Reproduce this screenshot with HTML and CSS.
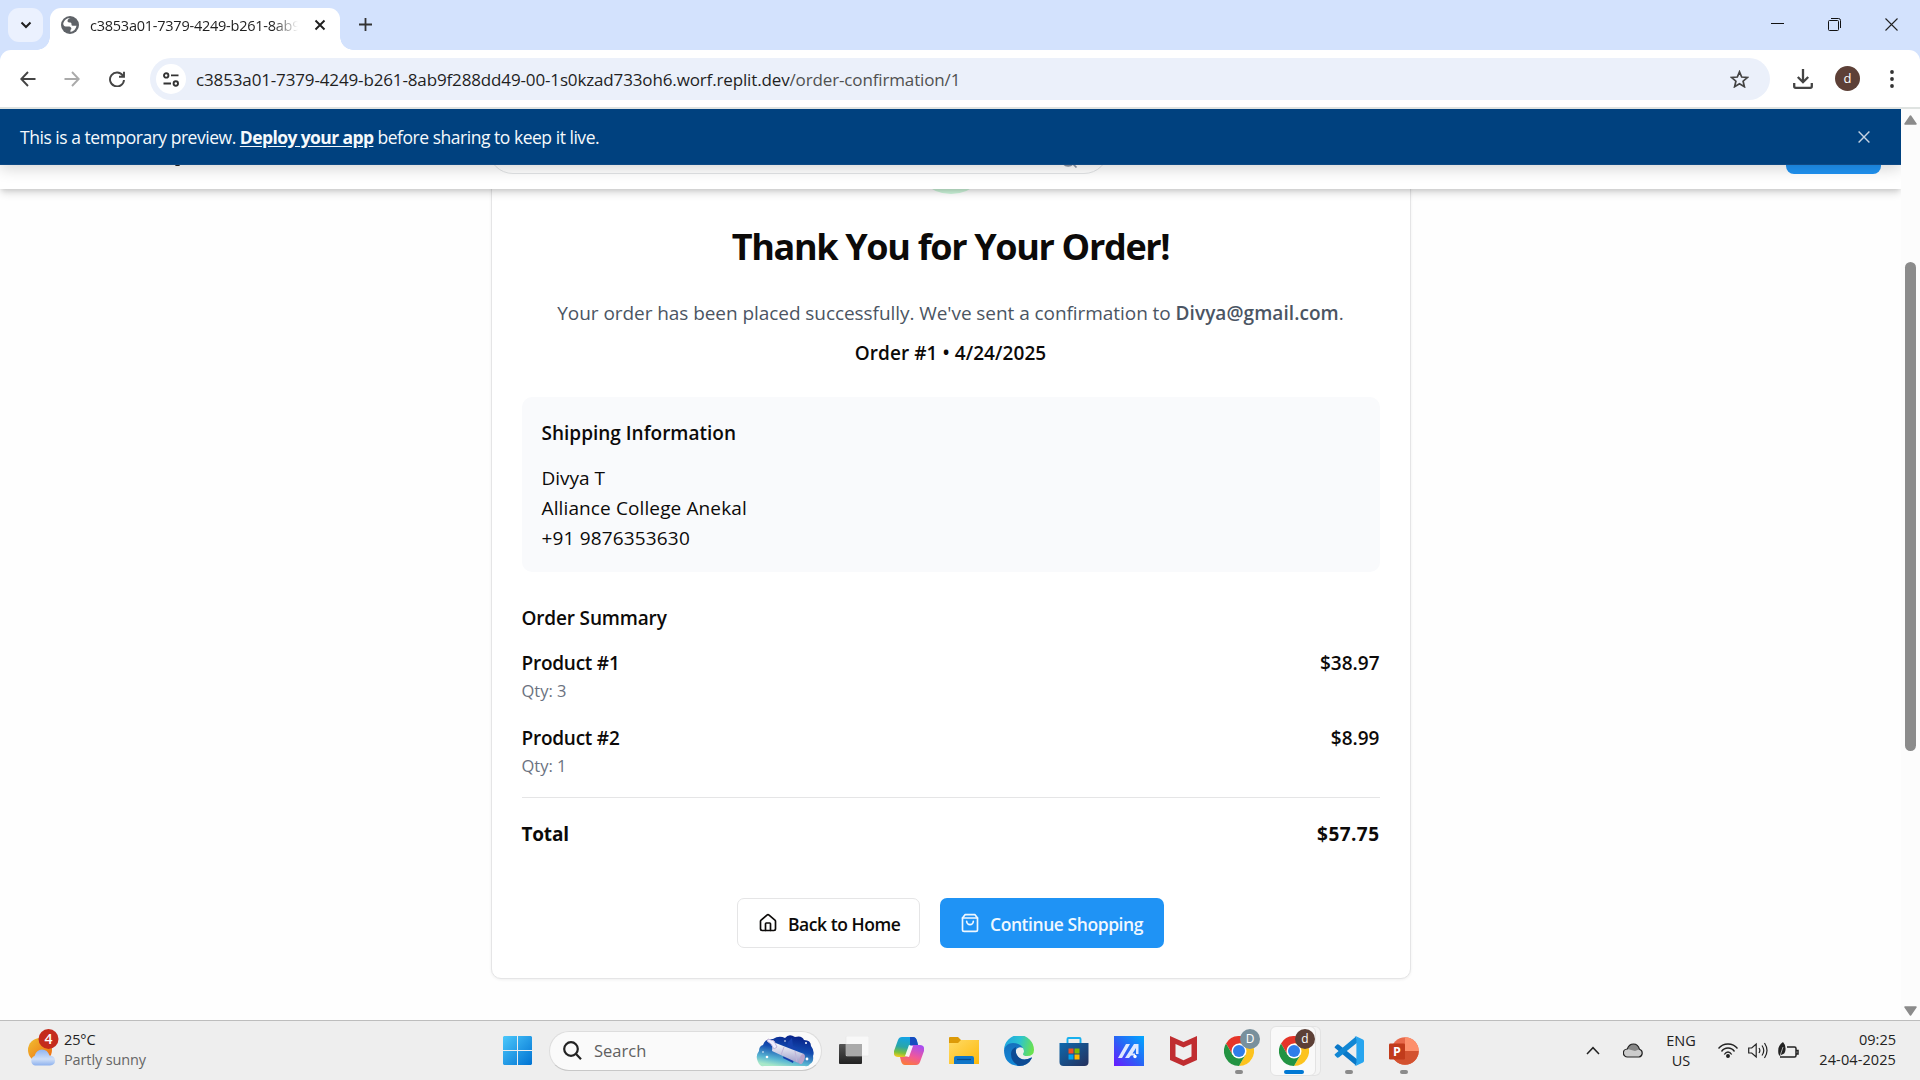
FILE: index.html
```html
<!DOCTYPE html>
<html lang="en">
<head>
<meta charset="utf-8">
<title>Order confirmation</title>
<link rel="stylesheet" href="styles.css">
</head>
<body>
<svg width="0" height="0" class="defs">
  <defs>
    <symbol id="chrome" viewBox="0 0 48 48">
      <circle cx="24" cy="24" r="24" fill="#fff"/>
      <path d="M24 12h20.8A24 24 0 0 0 3.2 12l10.4 18z" fill="#e53529"/>
      <path d="M34.4 30 24 48A24 24 0 0 0 44.8 12H24z" fill="#fcc31e"/>
      <path d="M13.6 30 3.2 12A24 24 0 0 0 24 48l10.4-18z" fill="#229342"/>
      <circle cx="24" cy="24" r="12" fill="#fff"/>
      <circle cx="24" cy="24" r="9.6" fill="#2f7de9"/>
    </symbol>
  </defs>
</svg>
<div class="screen">
  <div class="tabstrip">
    <div class="tab-search"><svg width="12" height="8" viewBox="0 0 12 8"><path d="M1.5 1.5 6 6l4.500-4.500" fill="none" stroke="#1f1f1f" stroke-width="2"/></svg></div>
    <div class="tab">
      <svg class="globe" width="18" height="18" viewBox="0 0 18 18"><circle cx="9" cy="9" r="9" fill="#5f6368"/><path d="M9.500 2c-2 .5-3 1.600-3 3 0 1.300 1.300 1.500 2.800 1.600 1 .1 1.200.9 1.200 1.800 0 1 .8 1.300 1.800 1.300h3.200C15 13 12.500 15.500 9.500 16v-2.300c1-.3 1-1.200.6-2-.5-.9-1.500-1.200-2.600-1.200H4.500C3.500 10.500 2.300 9 2.200 8c.3-2.700 2.800-6.200 7.300-6z" fill="#fff"/></svg>
      <span class="tab-title">c3853a01-7379-4249-b261-8ab9</span>
      <svg width="12" height="12" viewBox="0 0 12 12"><path d="M1.500 1.500l9 9m0-9l-9 9" stroke="#1f1f1f" stroke-width="1.900"/></svg>
    </div>
    <svg class="plus" width="13" height="13" viewBox="0 0 13 13"><path d="M6.500 0v13M0 6.500h13" stroke="#333" stroke-width="1.800"/></svg>
    <div class="win-controls">
      <svg width="13" height="13" viewBox="0 0 13 13"><path d="M0 5.500h13" stroke="#111"/></svg>
      <svg width="13" height="13" viewBox="0 0 13 13" fill="none" stroke="#111"><rect x=".5" y="2.500" width="10" height="10" rx="1"/><path d="M3 .5h7.500a2 2 0 0 1 2 2V10"/></svg>
      <svg width="13" height="13" viewBox="0 0 13 13"><path d="M.5.5l12 12m0-12l-12 12" stroke="#222" stroke-width="1.100"/></svg>
    </div>
  </div>
  <div class="toolbar-bg">
  <div class="toolbar">
    <div class="nav">
      <svg width="16" height="16" viewBox="0 0 16 16" fill="none" stroke="#444" stroke-width="1.900"><path d="M15.500 8H2M8 1 1.300 8 8 15"/></svg>
      <svg width="16" height="16" viewBox="0 0 16 16" fill="none" stroke="#aaa" stroke-width="1.900"><path d="M.5 8H14M8 1l6.700 7L8 15"/></svg>
      <svg width="16" height="16" viewBox="0 0 16 16" fill="none" stroke="#444" stroke-width="1.900"><path d="M13.800 4.500A7 7 0 1 0 15 9M15 .8v5H10"/></svg>
    </div>
    <div class="omnibox">
      <div class="site"><svg width="16" height="15" viewBox="0 0 16 15" fill="none" stroke="#333" stroke-width="1.900"><circle cx="3.200" cy="3.400" r="2.200"/><path d="M8 3.400h7.500M.5 11.500H8"/><circle cx="12.800" cy="11.500" r="2.200"/></svg></div>
      <span class="url">c3853a01-7379-4249-b261-8ab9f288dd49-00-1s0kzad733oh6.worf.replit.dev<span class="path">/order-confirmation/1</span></span>
      <svg class="star" width="19" height="18" viewBox="0 0 19 18"><path d="M9.500 1.800l2.200 5.200 5.700.5-4.300 3.700 1.300 5.500-4.900-3-4.900 3 1.300-5.500L1.600 7.500l5.700-.5z" fill="none" stroke="#444" stroke-width="1.700"/></svg>
    </div>
    <svg class="dl" width="20" height="20" viewBox="0 0 20 20" fill="none" stroke="#444" stroke-width="2.300"><path d="M10 0v12.500M4.800 8l5.200 5.200L15.200 8M1.200 14v3.300q0 1.500 1.500 1.500h14.600q1.500 0 1.500-1.500V14"/></svg>
    <div class="avatar">d</div>
    <svg class="kebab" width="4" height="18" viewBox="0 0 4 18" fill="#333"><circle cx="2" cy="2" r="1.900"/><circle cx="2" cy="9" r="1.900"/><circle cx="2" cy="16" r="1.900"/></svg>
  </div>
  </div>
  <div class="viewport">
    <div class="web">
      <div class="banner">
        <span class="banner-text">This is a temporary preview. <a>Deploy your app</a> before sharing to keep it live.</span>
        <svg width="12" height="12" viewBox="0 0 12 12"><path d="M.6.6l10.800 10.800m0-10.800L.6 11.400" stroke="#c5d3e2" stroke-width="1.400"/></svg>
      </div>
      <header class="site-header">
        <span class="logo-tail"></span>
        <div class="search-field"><svg width="20" height="20" viewBox="0 0 24 24" fill="none" stroke="#8b95a5" stroke-width="2"><circle cx="11" cy="11" r="8"/><path d="m21 21-4.300-4.300"/></svg></div>
        <div class="login"></div>
      </header>
      <main class="card">
        <div class="check"></div>
        <h1>Thank You for Your Order!</h1>
        <p class="lead">Your order has been placed successfully. We've sent a confirmation to <b>Divya@gmail.com</b>.</p>
        <p class="order-no">Order #1 • 4/24/2025</p>
        <section class="shipping">
          <h2>Shipping Information</h2>
          <p class="name">Divya T</p>
          <p class="addr">Alliance College Anekal</p>
          <p class="phone">+91 9876353630</p>
        </section>
        <section class="summary">
          <h2>Order Summary</h2>
          <div class="item"><div><p class="product">Product #1</p><p class="qty">Qty: 3</p></div><span>$38.97</span></div>
          <div class="item"><div><p class="product">Product #2</p><p class="qty">Qty: 1</p></div><span>$8.99</span></div>
          <div class="total"><span>Total</span><span class="amount">$57.75</span></div>
        </section>
        <div class="actions">
          <div class="btn outline"><svg width="20" height="20" viewBox="0 0 24 24" fill="none" stroke="#0c0a09" stroke-width="2" stroke-linecap="round" stroke-linejoin="round"><path d="M15 21v-8a1 1 0 0 0-1-1h-4a1 1 0 0 0-1 1v8"/><path d="M3 10a2 2 0 0 1 .709-1.528l7-5.999a2 2 0 0 1 2.582 0l7 5.999A2 2 0 0 1 21 10v9a2 2 0 0 1-2 2H5a2 2 0 0 1-2-2z"/></svg><span>Back to Home</span></div>
          <div class="btn primary"><svg width="20" height="20" viewBox="0 0 24 24" fill="none" stroke="#f0f8ff" stroke-width="2" stroke-linecap="round" stroke-linejoin="round"><path d="M6 2 3 6v14a2 2 0 0 0 2 2h14a2 2 0 0 0 2-2V6l-3-4Z"/><path d="M3 6h18"/><path d="M16 10a4 4 0 0 1-8 0"/></svg><span>Continue Shopping</span></div>
        </div>
      </main>
    </div>
    <div class="scrollbar">
      <svg width="13" height="10" viewBox="0 0 13 10"><path d="M6.500 1 12 9H1z" fill="#8b8b8b" stroke="#8b8b8b" stroke-width="1.500" stroke-linejoin="round"/></svg>
      <div class="thumb"></div>
      <svg class="down" width="13" height="10" viewBox="0 0 13 10"><path d="M6.500 9 12 1H1z" fill="#8b8b8b" stroke="#8b8b8b" stroke-width="1.500" stroke-linejoin="round"/></svg>
    </div>
  </div>
  <div class="taskbar">
    <div class="weather">
      <svg width="32" height="40" viewBox="0 0 32 40">
        <defs><linearGradient id="sun" x1="0" y1="0" x2="1" y2="1"><stop offset="0" stop-color="#efc033"/><stop offset="1" stop-color="#f0650c"/></linearGradient><linearGradient id="cl" x1="0" y1="0" x2="0" y2="1"><stop offset="0" stop-color="#8fb4f2"/><stop offset=".6" stop-color="#cfdff8"/><stop offset="1" stop-color="#8db1ee"/></linearGradient></defs>
        <circle cx="12" cy="22" r="12" fill="url(#sun)"/><path d="M7 37.500a5 5 0 0 1-.5-9.500q2 -6.500 7.500-6.500t7.500 6q5.500.5 5.500 5t-5 5z" fill="url(#cl)"/>
        <circle cx="20.500" cy="11" r="10" fill="#c42b1c"/><text x="20.500" y="16.200" text-anchor="middle" class="badge-num">4</text>
      </svg>
      <div class="weather-text"><span>25°C</span><span class="cond">Partly sunny</span></div>
    </div>
    <div class="slot start"><svg width="29" height="29" viewBox="0 0 29 29"><defs><linearGradient id="w" x1="0" y1="0" x2="1" y2="1" gradientUnits="objectBoundingBox"><stop offset="0" stop-color="#4cc8fb"/><stop offset="1" stop-color="#0072d2"/></linearGradient></defs><path fill="url(#w)" d="M1 0h13v14H0V1zM15 0h13l1 1v13H15zM0 15h14v14H1l-1-1zM15 15h14v13l-1 1H15z"/></svg></div>
    <div class="search">
      <svg width="19" height="19" viewBox="0 0 19 19" fill="none" stroke="#222" stroke-width="2.200"><circle cx="8" cy="8" r="6.800"/><path d="m12.800 12.800 5.200 5.400"/></svg>
      <span>Search</span>
      <svg class="scope" width="58" height="33" viewBox="0 0 58 33">
        <defs><linearGradient id="sky" x1=".7" y1="0" x2=".35" y2="1"><stop offset="0" stop-color="#071f86"/><stop offset=".45" stop-color="#124bb0"/><stop offset=".8" stop-color="#5ab7d3"/><stop offset="1" stop-color="#a8e8c8"/></linearGradient><linearGradient id="tube" x1="0" y1="0" x2="0" y2="1"><stop offset="0" stop-color="#fff"/><stop offset="1" stop-color="#9a9ac8"/></linearGradient></defs>
        <path d="M2 28q-3-6 1-11 0-5 4-6Q9 4 17 5q6-4 12-1 4-5 10-1 7-2 9 3 7 0 7 6 4 5 2 10 1 6-3 8-2 3-5 2H8q-4 1-6-4z" fill="url(#sky)"/>
        <path d="M27 24l10 5 1-4-10-5zM32 8l4-4 1 8 5 2-3 2-8-4z" fill="#1641ad"/>
        <path d="m17 8 31 12-4 10-28-13z" fill="url(#tube)"/><path d="m12 5 6 2 3 6-3 2-3-5-4-3zM39 17l2 11M28 13l-3 8" fill="#eef" stroke="#c0b4d8" stroke-width="1"/><ellipse cx="46" cy="25" rx="2.500" ry="5.300" transform="rotate(20 46 25)" fill="#b9a4cb"/>
        <g fill="#fff"><circle cx="11" cy="23" r="1.300"/><circle cx="7" cy="18" r=".8"/><circle cx="51" cy="25" r="1.400"/><circle cx="50" cy="9" r="1"/><circle cx="29" cy="7" r=".8"/></g>
      </svg>
    </div>
    <div class="apps">
      <div class="slot"><svg width="30" height="29" viewBox="0 0 30 29"><defs><linearGradient id="tv" x1="0" y1="0" x2="0" y2="1"><stop offset="0" stop-color="#555"/><stop offset="1" stop-color="#222"/></linearGradient></defs><rect x="0" y="8" width="23" height="20" rx="1" fill="url(#tv)"/><rect x="7" y="0" width="23" height="20" rx="1" fill="#f8f8f8" stroke="#e2e2e2" stroke-width=".5"/><path d="M7 8h16v12H8l-1-1z" fill="#aaa"/></svg></div>
      <div class="slot"><svg width="30" height="28" viewBox="0 0 30 28"><defs><linearGradient id="c1" x1=".5" y1="0" x2=".3" y2="1"><stop offset="0" stop-color="#12a3e8"/><stop offset=".5" stop-color="#2aa6a8"/><stop offset=".8" stop-color="#7cc13c"/><stop offset="1" stop-color="#f0ca20"/></linearGradient><linearGradient id="c2" x1=".7" y1="0" x2=".3" y2="1"><stop offset="0" stop-color="#a94df0"/><stop offset=".55" stop-color="#f0589a"/><stop offset="1" stop-color="#fb7a3c"/></linearGradient></defs><path d="M8 0h11q3 0 4 4l1 4h-4q-3 0-4 4l-2 5q-1 3-4 3H4q-5 0-4-6L4 3q1-3 4-3z" fill="url(#c1)"/><path d="M16 0h3q3 0 4 4l1 4h-4l-4 1z" fill="#154bc0"/><path d="M22 28H11q-3 0-4-4l-1-4h4q3 0 4-4l2-5q1-3 4-3h6q5 0 4 6l-4 11q-1 3-4 3z" fill="url(#c2)"/><path d="m15 8 4 1-4 11-4-1z" fill="#fff" opacity=".9"/></svg></div>
      <div class="slot"><svg width="30" height="27" viewBox="0 0 30 27"><defs><linearGradient id="f" x1="0" y1="0" x2="1" y2="1"><stop offset="0" stop-color="#ffdb66"/><stop offset="1" stop-color="#fdb90b"/></linearGradient></defs><path d="M0 1q0-1 1-1h8l3 3h17q1 0 1 1v6H0z" fill="#dc9a08"/><path d="M0 6h9l3-3h17q1 0 1 1v23H0z" fill="url(#f)"/><path d="M5 27v-6q0-2 2-2h16q2 0 2 2v6z" fill="#0f75c8"/><path d="M8 22.500h14" stroke="#084c8c" stroke-width="1.200"/></svg></div>
      <div class="slot"><svg width="30" height="30" viewBox="0 0 30 30"><defs><linearGradient id="e1" x1="0" y1=".3" x2="1" y2=".5"><stop offset="0" stop-color="#1fa5e2"/><stop offset=".5" stop-color="#2cc3d0"/><stop offset="1" stop-color="#6be24d"/></linearGradient><linearGradient id="e2" x1="0" y1="0" x2="0" y2="1"><stop offset="0" stop-color="#1570bd"/><stop offset="1" stop-color="#1288d8"/></linearGradient></defs><path d="M0 14A15 15 0 0 1 30 14q0 6-7 6-4 0-4-2 1-2 1-3-1-6-9-6Q3 9 0 14z" fill="url(#e1)"/><path d="M0 14Q2 7 9 7q7 0 10 5-5-2-7 2-1 6 5 9 5 2 11-2Q24 30 15 30 0 29 0 14z" fill="url(#e2)"/><path d="M7 18q0-5 5-7-1 5 1 8 4 7 14 3 1-1 1 0-4 8-13 8-8-4-8-12z" fill="#0d4b94"/></svg></div>
      <div class="slot"><svg width="30" height="30" viewBox="0 0 30 30"><defs><linearGradient id="s" x1="0" y1="0" x2="1" y2="1"><stop offset="0" stop-color="#0d69ae"/><stop offset="1" stop-color="#25305c"/></linearGradient></defs><path d="M8.500 7V3q0-1 1-1h11q1 0 1 1v4" fill="none" stroke="#18b0ee" stroke-width="1.900"/><path d="M.5 7h29v19q0 4-4 4h-21q-4 0-4-4z" fill="url(#s)"/><path d="M9.500 12.500h5v5h-5z" fill="#f25022"/><path d="M15.500 12.500h5v5h-5z" fill="#7fba00"/><path d="M9.500 18.500h5v5h-5z" fill="#00a4ef"/><path d="M15.500 18.500h5v5h-5z" fill="#ffb900"/></svg></div>
      <div class="slot"><svg width="30" height="30" viewBox="0 0 30 30"><defs><linearGradient id="a" x1="1" y1="0" x2="0" y2="1"><stop offset="0" stop-color="#00a8ff"/><stop offset=".5" stop-color="#2865f5"/><stop offset="1" stop-color="#6a18ff"/></linearGradient></defs><path d="M0 0h30v30H0z" fill="url(#a)"/><path d="M4 22 12 8h4L8 22zM11 22l9-14h4.500v10H22v-6l-3.500 5.500h2.500v2h-4L15 22z" fill="#dfe9ff"/><circle cx="21" cy="20.500" r="1.700" fill="#fff"/></svg></div>
      <div class="slot"><svg width="27" height="30" viewBox="0 0 27 30"><path d="M0 0l13.500 6L27 0v24l-13.500 6L0 24z" fill="#c02d30"/><path d="M5.500 8l8 3.500 8-3.500v12.500l-8 3.700-8-3.700z" fill="#efefef"/></svg></div>
      <div class="slot"><svg width="30" height="30"><use href="#chrome"/></svg><span class="badge gray">D</span><i class="dot"></i></div>
      <div class="slot active"><svg width="30" height="30"><use href="#chrome"/></svg><span class="badge brown">d</span><i class="dot wide"></i></div>
      <div class="slot"><svg width="30" height="30" viewBox="0 0 30 30"><path d="M1 10.500 3 8.500q1-.6 2 .2L24 24l-2 5.500L1 12q-1-.8 0-1.500z" fill="#0a78c8"/><path d="M1 19.500l2 2q1 .6 2-.2L24 6l-2-5.500L1 18q-1 .8 0 1.500z" fill="#1187d4"/><path d="M22 .3 29 3.500q1 .5 1 1.700v19.600q0 1.200-1 1.700l-7 3.200q-1 .3-1.800-.5 2.200.8 2.200-1.800V2.600Q22.400 0 20.200.8 21-.1 22 .3z" fill="#27a5ef"/></svg><i class="dot"></i></div>
      <div class="slot"><svg width="30" height="30" viewBox="0 0 30 30"><circle cx="16" cy="15" r="13.700" fill="#e8694a"/><path d="M16 1.300A13.700 13.700 0 0 1 29.700 15H16z" fill="#fd8f6b"/><path d="M2.300 15h27.400A13.700 13.700 0 0 1 2.300 15z" fill="#d35230"/><rect x="0" y="7.500" width="16" height="16" rx="1.300" fill="#c13b1b"/><text x="8" y="19.500" text-anchor="middle" class="ppt">P</text></svg><i class="dot"></i></div>
    </div>
    <div class="tray">
      <svg class="chev" width="14" height="9" viewBox="0 0 14 9"><path d="M1 8l6-6.300L13 8" fill="none" stroke="#222" stroke-width="1.500"/></svg>
      <svg class="cloud" width="20" height="15" viewBox="0 0 20 15"><path d="M4.500 14a4 4 0 0 1-.2-8Q6 1 10.500 1t6 5.300A4 4 0 0 1 16 14z" fill="#ccc"/><path d="M4.500 6Q6 1 10.500 1t6 5.300L12 8z" fill="#888"/><path d="M4.500 14a4 4 0 0 1-.2-8Q6 1 10.500 1t6 5.300A4 4 0 0 1 16 14z" fill="none" stroke="#222" stroke-width="1.200"/></svg>
      <div class="lang"><span>ENG</span><span>US</span></div>
      <svg class="wifi" width="20" height="15" viewBox="0 0 20 15" fill="none" stroke="#222" stroke-width="1.300"><path d="M.5 5.500Q4 1 10 1t9.500 4.500M3.500 8.500Q6 5 10 5t6.500 3.500M6.300 11.500Q8 9 10 9t3.700 2.500"/><circle cx="10" cy="13" r="1.300" fill="#222"/></svg>
      <svg class="vol" width="21" height="17" viewBox="0 0 21 17" fill="none" stroke="#222" stroke-width="1.200"><path d="M.7 6v5h3l4.500 4V2L3.700 6zM11 6q1.700 2.500 0 5M14 3.500q3.500 5 0 10M16.500 1q5 7.500 0 15"/></svg>
      <svg class="bat" width="21" height="17" viewBox="0 0 21 17"><path d="M9 5h7.500q1.500 0 1.500 1.500v7q0 1.500-1.500 1.500H2M18 8.500h2v3.500h-2" fill="none" stroke="#222" stroke-width="1.500"/><path d="M.5 12Q-1 4 5 0q3 3 2.500 8Q7 12 4 12.500L1.500 14z" fill="#222"/><path d="M5 5 2 14" stroke="#bbb" stroke-width=".9"/></svg>
      <div class="clock"><span>09:25</span><span class="date">24-04-2025</span></div>
    </div>
  </div>
</div>
</body>
</html>
```
FILE: styles.css
```css
* { box-sizing: border-box; margin: 0; padding: 0; }
body { font-family: "Open Sans", "Noto Sans", sans-serif; color: #0c0a09; background: #fff; }
svg { display: block; flex: none; }
.defs { position: absolute; }
.screen { width: 1920px; height: 1080px; overflow: hidden; display: flex; flex-direction: column; }

/* browser tab strip */
.tabstrip { height: 50px; flex: none; background: #d3e2fd; display: flex; padding: 8px 22px 0 8px; }
.tab-search { width: 35px; height: 34px; border-radius: 11px; background: #ebf1fe; display: flex; align-items: center; justify-content: center; }
.tab { position: relative; width: 290px; height: 42px; margin-left: 7px; border-radius: 11px 11px 0 0; background: #fff; display: flex; align-items: center; padding: 0 14px 8px 11px; }
.tab::before, .tab::after { content: ""; position: absolute; bottom: 0; width: 13px; height: 13px; }
.tab::before { left: -13px; background: radial-gradient(circle at 0 0, transparent 12.5px, #fff 13px); }
.tab::after { right: -13px; background: radial-gradient(circle at 100% 0, transparent 12.5px, #fff 13px); }
.tab-title { width: 208px; margin: 0 16px 0 11px; overflow: hidden; white-space: nowrap; font-size: 14.5px; letter-spacing: -0.24px; color: #1f1f1f; -webkit-mask-image: linear-gradient(90deg, #000 88%, transparent); mask-image: linear-gradient(90deg, #000 88%, transparent); }
.plus { margin: 10px 0 0 19px; }
.win-controls { margin: 10px 0 0 auto; display: flex; gap: 44px; }

/* toolbar */
.toolbar-bg { height: 59px; flex: none; background: #d3e2fd; }
.toolbar { height: 59px; background: #fff; border-radius: 11px 11px 0 0; border-bottom: 2px solid #dfe3e1; display: flex; align-items: center; }
.nav { display: flex; gap: 28px; padding-left: 20px; width: 150px; }
.nav svg:nth-child(3) { margin-left: 1px; }
.omnibox { width: 1620px; height: 42px; border-radius: 21px; background: #ebf0fa; display: flex; align-items: center; padding: 0 21px 0 6px; margin-top: 1px; }
.site { width: 30px; height: 30px; border-radius: 50%; background: #fff; display: flex; align-items: center; justify-content: center; }
.url { margin-left: 10px; padding-top: 1px; font-size: 17px; letter-spacing: -0.14px; line-height: 24px; white-space: nowrap; color: #1f1f1f; }
.path { color: #505050; }
.star { margin-left: auto; }
.dl { margin-left: 22.500px; }
.avatar { width: 25px; height: 25px; margin-left: 22.500px; border-radius: 50%; background: #5d4037; color: #fff; font-size: 13px; line-height: 25px; text-align: center; }
.kebab { margin-left: 30px; }

/* page viewport */
.viewport { height: 911px; flex: none; display: flex; }
.web { position: relative; width: 1901px; height: 911px; overflow: hidden; background: #fefefe; }
.banner { position: absolute; z-index: 3; left: 0; top: 0; width: 1901px; height: 56px; background: #00417f; border-bottom: 1px solid #0f4a85; color: #f5f9fc; display: flex; align-items: center; justify-content: space-between; padding: 0 31px 0 20px; font-size: 17.5px; box-shadow: 0 4px 14px rgba(0, 0, 0, .16); }
.banner-text { white-space: nowrap; letter-spacing: -0.47px; }
.banner a { font-weight: 700; text-decoration: underline; text-underline-offset: 2px; letter-spacing: -0.6px; }
.site-header { position: relative; z-index: 2; height: 80px; background: #fff; box-shadow: 0 5px 8px -1px rgba(0, 0, 0, .14), 0 2px 5px -1px rgba(0, 0, 0, .12); display: flex; align-items: center; padding-right: 20px; }
.logo-tail { width: 5px; height: 3px; margin: 31px 308px 0 175px; background: #222; border-radius: 2px; }
.search-field { width: 621px; height: 50px; border: 1px solid #e2e4e6; border-radius: 25px; display: flex; align-items: center; justify-content: flex-end; padding: 21px 29px 0 0; }
.login { width: 95px; height: 50px; margin-left: auto; border-radius: 8px; background: #1f93f3; }

/* confirmation card */
.card { width: 920px; margin: -106px auto 0; padding: 30px; border: 1px solid #e5e5e6; border-radius: 10px; background: #fff; box-shadow: 0 1px 3px rgba(0, 0, 0, .06); font-size: 19px; line-height: 30px; }
.check { width: 80px; height: 80px; border-radius: 50%; background: #cdf6db; margin: 0 auto; }
h1 { margin-top: 30px; font-size: 36px; line-height: 45px; font-weight: 700; letter-spacing: -1.34px; text-align: center; white-space: nowrap; }
.lead { margin-top: 29px; text-align: center; color: #4b5563; white-space: nowrap; letter-spacing: -0.06px; }
.lead b, h2, .order-no, .product, .item > span { font-weight: 600; font-size: 19px; }
.lead b { letter-spacing: .06px; }
.order-no { margin-top: 10px; text-align: center; letter-spacing: .07px; }
.shipping { margin-top: 29px; height: 175px; padding: 21px 20px 19px; border-radius: 10px; background: #f9fafc; }
.addr { letter-spacing: .12px; }
.phone { letter-spacing: .16px; }
h2 { margin-bottom: 15px; }
.summary { margin-top: 31px; }
.summary h2 { letter-spacing: -.16px; }
.item, .total { display: flex; justify-content: space-between; }
.item + .item { margin-top: 20px; }
.product { letter-spacing: -.24px; }
.qty { font-size: 16.500px; line-height: 25px; color: #6b7280; }
.total { margin-top: 19px; padding-top: 21px; border-top: 1px solid #e5e5e6; font-weight: 700; letter-spacing: -.2px; }
.amount { letter-spacing: .45px; }
.actions { margin-top: 49px; display: flex; justify-content: center; gap: 20px; }
.btn { height: 50px; border-radius: 7px; display: flex; align-items: center; padding: 0 20px; gap: 10px; font-size: 17.5px; letter-spacing: -.44px; font-weight: 600; white-space: nowrap; }
.btn span { padding-top: 2px; }
.outline { width: 183px; border: 1px solid #e5e5e6; }
.primary { width: 224px; background: #1f93f5; color: #f0f8ff; }

/* scrollbar */
.scrollbar { width: 19px; background: #fcfcfc; padding: 6px 3px 4px; display: flex; flex-direction: column; align-items: center; }
.thumb { width: 11px; height: 489px; border-radius: 6px; background: #8b8b8b; margin-top: 137px; }
.down { margin-top: auto; }

/* taskbar */
.taskbar { height: 60px; flex: none; background: #eee; border-top: 1px solid #bdbdbd; display: flex; align-items: center; }
.weather { width: 490px; display: flex; align-items: center; padding-left: 28px; height: 59px; }
.weather svg { margin-top: -6px; }
.weather-text { display: flex; flex-direction: column; margin: -1px 0 0 4px; font-size: 14.500px; line-height: 20px; letter-spacing: -.12px; color: #222; }
.cond { color: #666; }
.badge-num { font-size: 14px; fill: #fff; font-weight: 600; }
.slot { width: 55px; height: 59px; display: flex; align-items: center; justify-content: center; position: relative; }
.apps { display: flex; }
.apps .slot, .start { padding-right: 1px; }
.search { width: 273px; height: 40px; margin: 0 4.500px 0 4px; border-radius: 20px; background: #fafafa; border: 1px solid #ddd; border-bottom-color: #c8c8c8; display: flex; align-items: center; padding: 0 7px 0 13px; font-size: 16.500px; color: #606060; }
.search span { margin-left: 12px; }
.scope { margin-left: auto; }
.active::before { content: ""; position: absolute; left: 3px; top: 5px; width: 44px; height: 48px; border-radius: 6px; background: #f9f9f9; border: 1px solid #e3e3e3; box-shadow: 5px 0 0 -1px #f4f4f4, 5px 0 0 0 #e3e3e3; }
.active svg { position: relative; }
.badge { position: absolute; left: 28.500px; top: 8px; width: 20px; height: 20px; border-radius: 50%; color: #fff; font-size: 12px; line-height: 20px; text-align: center; }
.gray { background: #78909c; }
.brown { background: #5d4037; }
.dot { position: absolute; left: 23px; top: 49px; width: 8px; height: 4px; border-radius: 2px; background: #8a8a8a; }
.wide { left: 17px; width: 20px; background: #0078d4; }
.ppt { font-size: 12.500px; font-weight: 700; fill: #fff; }
.tray { margin-left: auto; padding-right: 24px; display: flex; align-items: center; font-size: 14.500px; line-height: 20px; color: #222; }
.cloud { margin-left: 23px; }
.lang { width: 36px; margin-left: 20px; display: flex; flex-direction: column; align-items: center; }
.wifi { margin-left: 19px; }
.vol { margin-left: 10px; }
.bat { margin-left: 9px; }
.clock { width: 97px; display: flex; flex-direction: column; align-items: flex-end; margin-top: -1px; }
.date { letter-spacing: .1px; }
```
